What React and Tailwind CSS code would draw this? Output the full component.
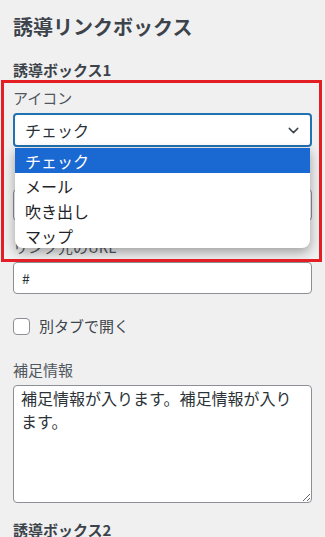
import { ChevronDown } from "lucide-react";

const font = { fontFamily: '"Noto Sans CJK JP", "Noto Sans", sans-serif' };

function Field({ label, value, className }) {
  return (
    <div className={className}>
      <div className="text-[15px] leading-[20px] text-[#50575e]">{label}</div>
      <div className="mt-[5px] h-[32px] rounded-[4px] border border-[#8c8f94] bg-white px-[8px] flex items-center text-[14px] text-[#2c3338]">
        {value}
      </div>
    </div>
  );
}

export default function App() {
  const options = ["チェック", "メール", "吹き出し", "マップ"];

  return (
    <div className="relative h-[537px] overflow-hidden bg-[#f0f0f1] px-[13px]" style={font}>
      <h2 className="pt-[13px] text-[20px] leading-[28px] font-bold text-[#3c434a]">誘導リンクボックス</h2>

      <h3 className="mt-[19px] text-[15px] leading-[20px] font-bold text-[#3c434a]">誘導ボックス1</h3>

      {/* icon select */}
      <div className="relative mt-[8px]">
        <div className="text-[15px] leading-[20px] text-[#50575e]">アイコン</div>
        <div className="mt-[5px] h-[34px] rounded-[4px] border-2 border-[#2271b1] bg-white pl-[10px] pr-[8px] flex items-center justify-between text-[16px] text-[#2c3338]">
          <span>チェック</span>
          <ChevronDown size={17} strokeWidth={2} className="text-[#3c434a]" />
        </div>

        {/* open dropdown list */}
        <ul className="absolute left-[2px] right-[2px] top-[60px] z-10 overflow-hidden rounded-b-[8px] bg-white shadow-[0_4px_12px_rgba(0,0,0,0.35)]">
          {options.map((o, i) => (
            <li
              key={o}
              className={
                "h-[25px] pl-[10px] flex items-center text-[16px] " +
                (i === 0 ? "bg-[#1a68d2] text-white" : "text-[#1d2327]")
              }
            >
              {o}
            </li>
          ))}
        </ul>
      </div>

      <Field label="リンクテキスト" value="" className="mt-[17px]" />
      <Field label="リンク先のURL" value="#" className="mt-[16px]" />

      <label className="mt-[22px] flex items-center gap-[9px] h-[20px]">
        <span className="w-[17px] h-[17px] rounded-[4px] border border-[#8c8f94] bg-white" />
        <span className="text-[15px] text-[#3c434a]">別タブで開く</span>
      </label>

      <div className="mt-[24px] text-[15px] leading-[20px] text-[#50575e]">補足情報</div>
      <textarea
        className="mt-[5px] block w-full h-[118px] rounded-[4px] border border-[#8c8f94] bg-white pl-[7px] pr-[8px] pt-[1px] text-[16px] leading-[23px] text-[#2c3338] resize-y outline-none"
        style={font}
        defaultValue="補足情報が入ります。補足情報が入ります。"
      />

      <h3 className="mt-[17px] text-[15px] leading-[20px] font-bold text-[#3c434a]">誘導ボックス2</h3>

      {/* red highlight frame */}
      <div className="pointer-events-none absolute left-[1px] top-[80px] w-[321px] h-[182px] border-[3px] border-[#e31e24] z-20" />
    </div>
  );
}
